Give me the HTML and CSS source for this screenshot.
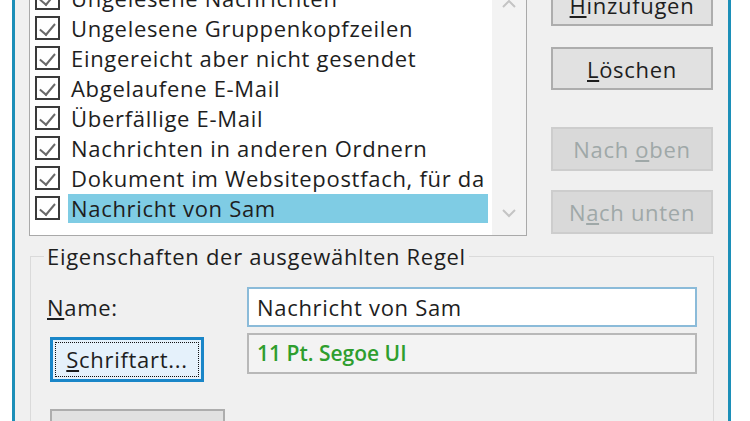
FILE: index.html
```html
<html>
<head>
  <title>Bedingte Formatierung</title>
  <link rel="stylesheet" href="styles.css">
</head>
<body>

<div class="dialog">
  <div class="top">
    <div class="listbox">
      <ul class="rules">
        <li><span class="check"></span><span class="rule-name">Ungelesene Nachrichten</span></li>
        <li><span class="check"></span><span class="rule-name">Ungelesene Gruppenkopfzeilen</span></li>
        <li><span class="check"></span><span class="rule-name">Eingereicht aber nicht gesendet</span></li>
        <li><span class="check"></span><span class="rule-name">Abgelaufene E-Mail</span></li>
        <li><span class="check"></span><span class="rule-name">Überfällige E-Mail</span></li>
        <li><span class="check"></span><span class="rule-name">Nachrichten in anderen Ordnern</span></li>
        <li><span class="check"></span><span class="rule-name">Dokument im Websitepostfach, für da</span></li>
        <li class="selected"><span class="check"></span><span class="rule-name">Nachricht von Sam</span></li>
      </ul>
      <div class="scrollbar">
        <span class="arrow">
          <svg width="14" height="9" viewBox="0 0 14 9"><polyline points="1,8 7,2 13,8" fill="none" stroke="#c4c4c4" stroke-width="2"/></svg>
        </span>
        <span class="arrow">
          <svg width="14" height="9" viewBox="0 0 14 9"><polyline points="1,1 7,7 13,1" fill="none" stroke="#c4c4c4" stroke-width="2"/></svg>
        </span>
      </div>
    </div>

    <div class="actions">
      <button class="btn"><u>H</u>inzufügen</button>
      <button class="btn btn-delete"><u>L</u>öschen</button>
      <button class="btn btn-up" disabled>Nach <u>o</u>ben</button>
      <button class="btn btn-down" disabled>N<u>a</u>ch unten</button>
    </div>
  </div>

  <fieldset class="props">
    <legend>Eigenschaften der ausgewählten Regel</legend>
    <div class="props-grid">
      <label class="field-label"><u>N</u>ame:</label>
      <input class="name-input" type="text" value="Nachricht von Sam">
      <button class="btn btn-font"><span class="focus-ring"><u>S</u>chriftart...</span></button>
      <div class="font-box">11 Pt. Segoe UI</div>
      <button class="btn btn-cond">Bedingung...</button>
    </div>
  </fieldset>
</div>

</body>
</html>
```

FILE: styles.css
```css
:root {
  --face: #f0f0f0;
  --frame: #1c8fb8;
  --text: #1e1e1e;
  --btn: #e1e1e1;
  --btn-border: #adadad;
}

* {
  box-sizing: border-box;
}

body {
  margin: 0;
  height: 421px;
  overflow: hidden;
  background: white;
  font-family: 'Open Sans', 'Noto Sans', sans-serif;
  font-size: 22px;
  letter-spacing: 0.7px;
  color: var(--text);
}

.dialog {
  margin: 0 19px 0 12px;
  min-height: 440px;
  background: var(--face);
  border-left: 3px solid var(--frame);
  border-right: 3px solid var(--frame);
  padding: 0 15px 0 14px;
}

.top {
  display: flex;
  gap: 24px;
  margin-top: -17px;
}

.listbox {
  width: 498px;
  display: flex;
  background: white;
  border: 1px solid #a9a9a9;
  border-top: none;
}

.rules {
  flex: 1;
  list-style: none;
  margin: 0;
  padding: 0 4px 12px 5px;
  min-width: 0;
}

.rules li {
  display: flex;
  align-items: center;
  height: 30px;
}

.check {
  flex: none;
  width: 25px;
  height: 24px;
  border: 2px solid #3a3a3a;
  background: white;
  position: relative;
}

.check::after {
  content: "";
  position: absolute;
  left: 6px;
  top: 2px;
  width: 7px;
  height: 13px;
  border-right: 2px solid #6a6a6a;
  border-bottom: 2px solid #6a6a6a;
  transform: rotate(40deg);
}

.rule-name {
  flex: 1;
  min-width: 0;
  margin-left: 8px;
  padding-left: 3px;
  height: 29px;
  line-height: 28px;
  white-space: nowrap;
  overflow: hidden;
}

.selected .rule-name {
  background: #7fcce4;
}

.scrollbar {
  width: 34px;
  background: #f3f3f3;
  display: flex;
  flex-direction: column;
  justify-content: space-between;
  padding: 12px 0 14px;
}

.arrow {
  display: flex;
  justify-content: center;
  align-items: center;
  height: 16px;
}

.actions {
  width: 162px;
  display: flex;
  flex-direction: column;
}

.btn {
  font-family: inherit;
  font-size: 22px;
  letter-spacing: 0.7px;
  color: var(--text);
  background: var(--btn);
  border: 2px solid var(--btn-border);
  height: 43px;
  padding: 0;
  cursor: pointer;
}

.btn-delete {
  margin-top: 21px;
}

.btn-up {
  margin-top: 37px;
  height: 44px;
}

.btn-down {
  margin-top: 19px;
  height: 44px;
}

.btn:disabled {
  background: #d9d9d9;
  border-color: #cdcdcd;
  color: #9fa8a8;
  cursor: default;
}

.props {
  margin: 7px 0 0 1px;
  width: 684px;
  border: 1px solid #dadada;
  padding: 0 16px 30px 16px;
}

.props legend {
  padding: 0 3px;
  margin-left: -3px;
  line-height: 26px;
}

.props-grid {
  display: grid;
  grid-template-columns: 200px 1fr;
  align-items: center;
  padding-top: 18px;
}

.field-label {
  line-height: 40px;
}

.name-input {
  height: 40px;
  font-family: inherit;
  font-size: 22px;
  letter-spacing: 0.7px;
  color: var(--text);
  border: 2px solid #8bbbd9;
  background: white;
  padding: 0 8px;
  outline: none;
}

.btn-font {
  margin: 10px 0 0 3px;
  width: 154px;
  height: 45px;
  background: #e5f1fb;
  border: 3px solid #1a86c8;
  padding: 2px;
}

.focus-ring {
  display: block;
  height: 100%;
  line-height: 33px;
  border: 1px dotted #111;
}

.font-box {
  margin-top: 6px;
  align-self: start;
  height: 41px;
  line-height: 37px;
  border: 2px solid #b8b8b8;
  background: #f3f3f3;
  padding: 0 8px;
  color: #2e9e2e;
  font-size: 21px;
  letter-spacing: 0;
  font-weight: 600;
}

.btn-cond {
  margin: 27px 0 0 3px;
  width: 175px;
}
```
